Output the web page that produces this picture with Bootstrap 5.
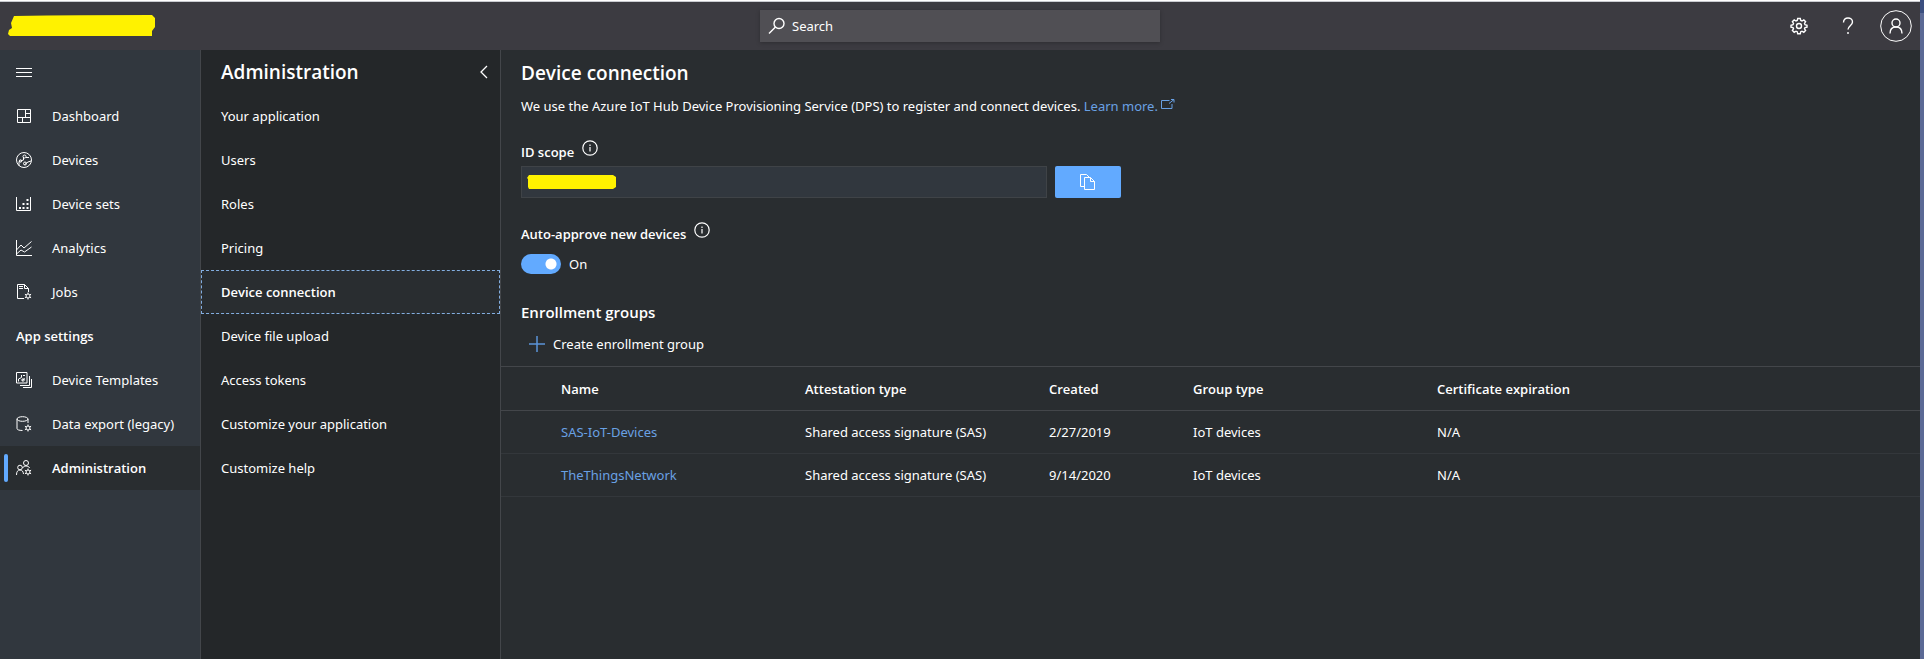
<!DOCTYPE html>
<html lang="en">
<head>
<meta charset="utf-8">
<meta name="viewport" content="width=device-width, initial-scale=1">
<title>Device connection</title>
<link href="https://cdn.jsdelivr.net/npm/bootstrap@5.3.0/dist/css/bootstrap.min.css" rel="stylesheet">
<style>
  :root { --line: #43464a; --accent: #62aaff; --link: #69a1e4; --surface: #292d30; --redact: #fff200; }
  body { font-family: "Noto Sans", "Open Sans", sans-serif; font-size: 13px; line-height: 20px; color: #fff; background: var(--surface);
    border-right: 4px solid #5b6995; border-image: linear-gradient(#3b4f80 13px, #5b6995 13px) 0 4 0 0; }
  svg { display: block; fill: none; stroke: currentColor; flex: none; }
  .topbar { height: 50px; background: #3c3b41; border-top: 1px solid #fff; box-shadow: inset 0 1px #c9cbd0; }
  .side { flex: 1 1 0; min-width: 0; }
  .brand-redacted { width: 148px; height: 22px; fill: var(--redact); stroke: none; }
  .searchbox { width: 400px; height: 32px; background: #504f54; box-shadow: 0 1px 4px rgba(0,0,0,.25); padding: 0 8px; gap: 6px; }
  .searchbox input { background: transparent; border: 0; color: #fff; outline: 0; padding: 0; }
  .searchbox input::placeholder { color: #fff; opacity: 1; }
  .plain { background: none; border: 0; padding: 0; color: inherit; }
  .rail { width: 201px; background: #31373e; border-right: 1px solid var(--line); flex: none; }
  .panel { width: 300px; background: #242729; border-right: 1px solid var(--line); flex: none; }
  .entry { height: 44px; display: flex; align-items: center; padding: 0 16px; color: #fff; text-decoration: none; }
  .panel .entry { padding: 0 12px 0 20px; }
  .rail .entry { gap: 20px; white-space: nowrap; }
  h1, h2, .semi, .groups th, .entry.current { font-family: "Open Sans", "Noto Sans", sans-serif; font-weight: 600; }
  .rail .entry.current { position: relative; background: var(--surface); }
  .rail .entry.current::before { content: ""; position: absolute; left: 4px; top: 8px; bottom: 8px; width: 4px; border-radius: 2px; background: var(--accent); }
  .panel .entry.current { background: var(--surface); outline: 1px dashed #83aee0; outline-offset: -1px; }
  h1, h2.panel-title { font-size: 19px; line-height: 46px; margin: 0; }
  h2.section { font-size: 15px; line-height: 20px; margin: 28px 0 12px; }
  .content { padding: 0 20px; }
  a.blue { color: var(--link); text-decoration: none; }
  .plus { color: #5b94d8; }
  .field-label { gap: 8px; line-height: 24px; margin: 24px 0 2px; }
  .scope { max-width: 600px; gap: 8px; }
  .scope-field { height: 32px; background: #31373e; border: 1px solid #3f4347; border-radius: 0; }
  .scope-field:focus { background: #31373e; box-shadow: none; }
  .mask { position: absolute; left: 6px; top: 9px; width: 90px; height: 14px; fill: var(--redact); stroke: none; }
  .copy { width: 66px; height: 32px; background: var(--accent); border: 0; border-radius: 2px; color: #fff; flex: none; }
  .toggle-row { padding: 6px 0 0; gap: 8px; }
  .form-switch .form-check-input { width: 40px; height: 20px; margin: 0; float: none; border: 0; background-color: var(--accent);
    background-image: radial-gradient(circle at 30px 10px, #fff 5px, transparent 6px); background-size: 100% 100%; background-position: 0 0; }
  .groups { table-layout: fixed; width: 100%; margin-top: 12px; border-collapse: collapse; border-top: 1px solid var(--line); }
  .groups th { height: 44px; padding: 0; border-bottom: 1px solid var(--line); }
  .groups td { height: 43px; padding: 0; border-bottom: 1px solid #33373b; }
  .c-pad { width: 60px; } .c-wide { width: 244px; } .c-date { width: 144px; }
</style>
</head>
<body class="d-flex flex-column min-vh-100">
<header class="topbar d-flex align-items-center">
  <div class="side px-2">
    <svg class="brand-redacted" viewBox="0 0 148 22" role="img" aria-label="Redacted name"><path d="M6 1Q70 0 144 0l3 3v9l-3 4v5H2l-2-2 1-4 3-2-1-5z"/></svg>
  </div>
  <label class="searchbox d-flex align-items-center">
    <svg width="18" height="18" viewBox="0 0 18 18" stroke-width="1.4"><circle cx="11" cy="6.5" r="5"/><path d="M7.500 10 1 16.500"/></svg>
    <input class="flex-fill" type="search" placeholder="Search" aria-label="Search">
  </label>
  <div class="side d-flex justify-content-end align-items-center px-2">
    <button class="plain me-4" aria-label="Settings"><svg width="18" height="18" viewBox="0 0 18 18" stroke-width="1.400"><path d="M7.700 1.500h2.600l.5 2 1.200.5 1.800-1.100 1.800 1.800L14.500 6.500l.5 1.200 2 .5v1.900l-2 .5-.5 1.200 1.100 1.700-1.800 1.800-1.800-1.100-1.200.5-.5 2H7.700l-.5-2-1.200-.5-1.800 1.100-1.800-1.800 1.100-1.700-.5-1.200-2-.5V8.200l2-.5.500-1.200L2.400 4.700l1.800-1.800L6 4l1.200-.5z"/><circle cx="9" cy="9" r="2.500"/></svg></button>
    <button class="plain mx-2" aria-label="Help"><svg width="16" height="18" viewBox="0 0 16 18" stroke-width="1.400"><path d="M3.500 5.500C3.500 2.500 5.500 1 8 1s4.500 1.600 4.500 4c0 3.500-4.500 4-4.500 7.500M8 15v2"/></svg></button>
    <button class="plain ms-3" aria-label="Account"><svg width="32" height="32" viewBox="0 0 32 32"><circle cx="16" cy="16" r="15.300"/><path stroke-width="1.400" d="M10 23.500c0-4.500 2.500-6.500 6-6.500s6 2 6 6.500"/><circle cx="16" cy="13" r="4" stroke-width="1.400"/></svg></button>
  </div>
</header>

<div class="d-flex flex-fill">
  <nav class="rail" aria-label="Main">
    <div class="entry"><button class="plain" aria-label="Menu"><svg width="16" height="16" viewBox="0 0 16 16"><path d="M0 4.500h16M0 8.500h16M0 12.500h16"/></svg></button></div>
    <a class="entry" href="#"><svg width="16" height="16" viewBox="0 0 16 16"><path d="M1.500 1.500h13v13h-13zM9.500 1.500v8M1.500 9.500h13M6.500 9.500v5M9.500 5.500h5"/></svg>Dashboard</a>
    <a class="entry" href="#"><svg width="16" height="16" viewBox="0 0 16 16"><circle cx="8" cy="8" r="7.500"/><path d="M3 14V9.500L7.500 8V5M10 5.500h3M8.500 12.500 12 10l3-1"/><circle cx="8.500" cy="4.500" r="1.500"/><circle cx="4.500" cy="9" r="1.200"/><circle cx="9" cy="11.500" r="1.500"/></svg>Devices</a>
    <a class="entry" href="#"><svg width="16" height="16" viewBox="0 0 16 16"><path d="M.5 1v13.500h14V1"/><path stroke-width="2" d="M3 12h2M6.500 12h2M10.500 12h2M6.500 8h2M10.500 8h2M10.500 4h2"/></svg>Device sets</a>
    <a class="entry" href="#"><svg width="16" height="16" viewBox="0 0 16 16"><path d="M.5 0v15.500H16M.5 10l4.500-5 3 3 7.500-6.500M.5 14 5 10l3.500 2L15.500 7"/></svg>Analytics</a>
    <a class="entry" href="#"><svg width="16" height="16" viewBox="0 0 16 16"><path d="M8 14.500H1.500v-14h7l4 4V8M8.500 .5v4h4M3 2.500h4M3 4.500h4"/><circle cx="12" cy="12" r="2"/><path d="M12 8.500V10M12 14v1.500M8.900 10.200l1.400.8M13.700 13l1.400.8M8.900 13.800l1.400-.8M13.700 11l1.400-.8"/></svg>Jobs</a>
    <div class="entry semi">App settings</div>
    <a class="entry" href="#"><svg width="16" height="16" viewBox="0 0 16 16"><path d="M.5 .5h10.500V11H.5zM13.500 4v9.500H4M15.500 7v8.500H7"/><path d="M2.500 9.500V7l3-1.500V3M6 8.500 9 6.500M7 3.500h2"/><circle cx="7" cy="8" r="1.200"/></svg>Device Templates</a>
    <a class="entry" href="#"><svg width="16" height="16" viewBox="0 0 16 16"><ellipse cx="6.500" cy="3" rx="5.500" ry="2.300"/><path d="M1 3v9.500c0 1.200 2 2 5.500 2M12 3v4"/><circle cx="12" cy="12" r="2"/><path d="M12 8.500V10M12 14v1.500M8.900 10.200l1.400.8M13.700 13l1.400.8M8.900 13.800l1.400-.8M13.700 11l1.400-.8"/></svg>Data export (legacy)</a>
    <a class="entry current" href="#" aria-current="page"><svg width="16" height="16" viewBox="0 0 16 16"><circle cx="10" cy="3" r="2.500"/><circle cx="4" cy="7.500" r="2.300"/><path d="M.5 15c0-3.500 1.300-5 3.500-5S7.200 11.500 7.500 14M6.500 8C7.500 6.500 8.500 6 10 6s3 .7 3.700 2"/><circle cx="12" cy="12" r="2"/><path d="M12 8.500V10M12 14v1.500M8.900 10.200l1.400.8M13.700 13l1.400.8M8.900 13.800l1.400-.8M13.700 11l1.400-.8"/></svg>Administration</a>
  </nav>

  <nav class="panel" aria-label="Administration">
    <div class="entry justify-content-between"><h2 class="panel-title">Administration</h2>
      <button class="plain" aria-label="Collapse"><svg width="8" height="14" viewBox="0 0 8 14" stroke-width="1.300"><path d="M7 1 1 7l6 6"/></svg></button></div>
    <a class="entry" href="#">Your application</a>
    <a class="entry" href="#">Users</a>
    <a class="entry" href="#">Roles</a>
    <a class="entry" href="#">Pricing</a>
    <a class="entry current" href="#" aria-current="page">Device connection</a>
    <a class="entry" href="#">Device file upload</a>
    <a class="entry" href="#">Access tokens</a>
    <a class="entry" href="#">Customize your application</a>
    <a class="entry" href="#">Customize help</a>
  </nav>

  <main class="flex-fill">
    <div class="content">
      <h1>Device connection</h1>
      <p class="mb-0 d-flex">We use the Azure IoT Hub Device Provisioning Service (DPS) to register and connect devices.&nbsp;<a class="blue d-flex align-items-center" href="#">Learn more.&nbsp;<svg width="14" height="14" viewBox="0 0 14 14"><path d="M8.500 1.500H.5v8h10.500V5M8 4.500l5-4M10 .5h3v3"/></svg></a></p>
      <div class="field-label d-flex">
        <label class="semi" for="scope">ID scope</label>
        <svg width="16" height="16" viewBox="0 0 16 16" stroke-width="1.200"><circle cx="8" cy="8" r="7.200"/><path d="M8 7v4.500M8 4.500V6"/></svg>
      </div>
      <div class="scope d-flex">
        <div class="position-relative flex-fill">
          <input id="scope" class="scope-field form-control" type="text" readonly>
          <svg class="mask" viewBox="0 0 90 14"><path d="M2 0h84l3 2v10l-3 2H2l-1-2V4L0 3z"/></svg>
        </div>
        <button class="copy d-flex align-items-center justify-content-center" aria-label="Copy"><svg width="16" height="16" viewBox="0 0 16 16"><path d="M4 12.500H.5V.5h6l3 3M4.500 3.500h6l4 4v8h-10zM10.500 3.500v4h4"/></svg></button>
      </div>
      <div class="field-label d-flex">
        <label class="semi" for="auto">Auto-approve new devices</label>
        <svg width="16" height="16" viewBox="0 0 16 16" stroke-width="1.200"><circle cx="8" cy="8" r="7.200"/><path d="M8 7v4.500M8 4.500V6"/></svg>
      </div>
      <div class="toggle-row form-switch d-flex align-items-center">
        <input id="auto" class="form-check-input" type="checkbox" role="switch" checked><span>On</span>
      </div>
      <h2 class="section">Enrollment groups</h2>
      <button class="plain d-flex align-items-center gap-2 ps-2"><svg class="plus" width="16" height="16" viewBox="0 0 16 16" stroke-width="1.500"><path d="M8 0v16M0 8h16"/></svg>Create enrollment group</button>
    </div>
    <table class="groups">
      <colgroup><col class="c-pad"><col class="c-wide"><col class="c-wide"><col class="c-date"><col class="c-wide"><col></colgroup>
      <thead><tr><th></th><th scope="col">Name</th><th scope="col">Attestation type</th><th scope="col">Created</th><th scope="col">Group type</th><th scope="col">Certificate expiration</th></tr></thead>
      <tbody>
        <tr><td></td><td><a class="blue" href="#">SAS-IoT-Devices</a></td><td>Shared access signature (SAS)</td><td>2/27/2019</td><td>IoT devices</td><td>N/A</td></tr>
        <tr><td></td><td><a class="blue" href="#">TheThingsNetwork</a></td><td>Shared access signature (SAS)</td><td>9/14/2020</td><td>IoT devices</td><td>N/A</td></tr>
      </tbody>
    </table>
  </main>
</div>
<script src="https://cdn.jsdelivr.net/npm/bootstrap@5.3.0/dist/js/bootstrap.bundle.min.js"></script>
</body>
</html>
